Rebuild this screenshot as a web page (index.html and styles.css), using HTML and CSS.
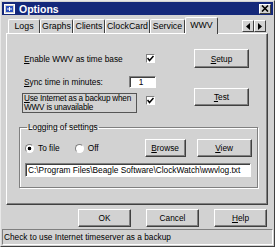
FILE: index.html
```html
<!DOCTYPE html>
<html lang="en">
<head>
  <meta charset="UTF-8">
  <title>Options</title>
  <link rel="stylesheet" href="styles.css">
</head>
<body>
  <div class="window">
    <div class="titlebar">
      <svg class="app-icon" width="11" height="10" viewBox="0 0 11 10">
        <rect x="0.5" y="0.5" width="10" height="9" fill="#d0d0d0" stroke="#fff"/>
        <rect x="2" y="2" width="7" height="6" fill="#2a50c0"/>
        <path d="M3 5 H8 M5.5 3 V7" stroke="#fff" stroke-width="1"/>
      </svg>
      <span class="title">Options</span>
      <span class="close">
        <svg width="8" height="7" viewBox="0 0 8 7"><path d="M1 0.5 L7 6.5 M7 0.5 L1 6.5" stroke="#000" stroke-width="1.6"/></svg>
      </span>
    </div>

    <div class="tabstrip">
      <div class="tab tab-logs">Logs</div>
      <div class="tab tab-graphs">Graphs</div>
      <div class="tab tab-clients">Clients</div>
      <div class="tab tab-clock">ClockCard</div>
      <div class="tab tab-service">Service</div>
      <div class="tab tab-wwv active">WWV</div>
      <div class="tab-scroll">
        <span class="arrow"><svg width="4" height="7" viewBox="0 0 4 7"><path d="M4 0 L0 3.5 L4 7Z" fill="#000"/></svg></span>
        <span class="arrow"><svg width="4" height="7" viewBox="0 0 4 7"><path d="M0 0 L4 3.5 L0 7Z" fill="#000"/></svg></span>
      </div>
    </div>

    <div class="panel">
      <div class="wwv-grid">
        <div class="lbl row1"><u>E</u>nable WWV as time base</div>
        <span class="check row1"><svg width="7" height="7" viewBox="0 0 7 7"><path d="M0.5 3 L2.5 5.5 L6.5 1" fill="none" stroke="#000" stroke-width="1.5"/></svg></span>
        <button class="btn btn-side row1"><u>S</u>etup</button>

        <div class="lbl row2"><u>S</u>ync time in minutes:</div>
        <input class="field minutes row2" type="text" value="1">

        <div class="lbl focus-box row3"><u>U</u>se Internet as a backup when<br>WWV is unavailable</div>
        <span class="check row3"><svg width="7" height="7" viewBox="0 0 7 7"><path d="M0.5 3 L2.5 5.5 L6.5 1" fill="none" stroke="#000" stroke-width="1.5"/></svg></span>
        <button class="btn btn-side btn-test row3"><u>T</u>est</button>
      </div>

      <fieldset class="logging">
        <legend>Logging of settings</legend>
        <div class="log-row">
          <span class="radio on"></span><span class="radio-lbl">To file</span>
          <span class="radio off"></span><span class="radio-lbl">Off</span>
          <button class="btn btn-browse"><u>B</u>rowse</button>
          <button class="btn btn-view"><u>V</u>iew</button>
        </div>
        <input class="field path" type="text" value="C:\Program Files\Beagle Software\ClockWatch\wwvlog.txt">
      </fieldset>
    </div>

    <div class="dialog-buttons">
      <button class="btn btn-dlg">OK</button>
      <button class="btn btn-dlg">Cancel</button>
      <button class="btn btn-dlg"><u>H</u>elp</button>
    </div>

    <div class="statusbar">Check to use Internet timeserver as a backup</div>
  </div>
</body>
</html>
```

FILE: styles.css
```css
body {
  margin: 0;
  font-family: "Liberation Sans", Arial, sans-serif;
  font-size: 8.3px;
  color: #000;
  background: #d2d2d2;
}
.window {
  width: 275px;
  height: 247px;
  box-sizing: border-box;
  border: 1px solid;
  border-color: #e8e8e8 #404040 #404040 #e8e8e8;
  padding: 1px;
  background: #d2d2d2;
  display: flex;
  flex-direction: column;
}
.titlebar {
  height: 13px;
  flex: none;
  background: #14287a;
  display: flex;
  align-items: center;
  padding: 0 2px 0 2px;
}
.app-icon {
  margin-right: 4px;
}
.title {
  color: #fff;
  font-weight: bold;
  font-size: 10.5px;
}
.close {
  margin-left: auto;
  width: 12px;
  height: 10px;
  box-sizing: border-box;
  background: #d2d2d2;
  border: 1px solid;
  border-color: #fff #404040 #404040 #fff;
  display: flex;
  align-items: center;
  justify-content: center;
}

/* tabs */
.tabstrip {
  height: 18px;
  flex: none;
  display: flex;
  align-items: flex-end;
  padding-left: 6px;
}
.tab {
  height: 14px;
  box-sizing: border-box;
  border: 1px solid;
  border-bottom: none;
  border-color: #fff #404040 #fff #fff;
  border-radius: 2px 2px 0 0;
  text-align: center;
  line-height: 12px;
  font-size: 8.8px;
}
.tab-logs { width: 32px; }
.tab-graphs { width: 33px; }
.tab-clients { width: 32px; }
.tab-clock { width: 45px; }
.tab-service { width: 35px; }
.tab-wwv { width: 33px; }
.tab.active {
  height: 17px;
  margin-bottom: -1px;
  background: #d2d2d2;
  position: relative;
  z-index: 1;
  line-height: 14px;
}
.tab-scroll {
  margin-left: auto;
  margin-right: 7px;
  margin-bottom: 1px;
  display: flex;
}
.arrow {
  width: 12px;
  height: 12px;
  box-sizing: border-box;
  border: 1px solid;
  border-color: #fff #404040 #404040 #fff;
  display: flex;
  align-items: center;
  justify-content: center;
}

/* panel */
.panel {
  height: 172px;
  flex: none;
  box-sizing: border-box;
  margin: 0 5px 0 4px;
  border: 1px solid;
  border-color: #fff #404040 #404040 #fff;
  box-shadow: inset -1px -1px #808080;
  padding: 15px 0 0 17px;
}
.wwv-grid {
  display: grid;
  grid-template-columns: 105px 27px 38px 55px;
  grid-template-rows: 19px 20px 25px;
}
.lbl {
  grid-column: 1;
  align-self: center;
}
.row1 { grid-row: 1; }
.row2 { grid-row: 2; }
.row3 { grid-row: 3; }
.lbl.row2 {
  align-self: end;
  line-height: 12px;
}
.check {
  grid-column: 2;
  justify-self: end;
  align-self: center;
  margin-right: 1px;
  width: 9px;
  height: 9px;
  box-sizing: border-box;
  background: #fff;
  border: 1px solid;
  border-color: #808080 #fff #fff #808080;
  display: flex;
  align-items: center;
  justify-content: center;
}
.field {
  font-family: inherit;
  font-size: inherit;
  background: #fff;
  box-sizing: border-box;
  border: 1px solid;
  border-color: #808080 #fff #fff #808080;
  box-shadow: inset 1px 1px #404040;
  outline: none;
  margin: 0;
}
.minutes {
  grid-column: 2;
  align-self: end;
  width: 27px;
  height: 12px;
  padding: 0 3px 0 0;
  text-align: center;
}
.focus-box {
  align-self: end;
  justify-self: start;
  margin-left: -2px;
  width: 115px;
  height: 20px;
  box-sizing: border-box;
  border: 1px solid #555;
  padding: 0 1px;
  line-height: 9px;
  white-space: nowrap;
  overflow: hidden;
  font-size: 8.2px;
  letter-spacing: -0.2px;
}
.btn {
  font-family: inherit;
  font-size: inherit;
  color: #000;
  background: #d2d2d2;
  box-sizing: border-box;
  border: 1px solid;
  border-color: #fff #404040 #404040 #fff;
  box-shadow: inset -1px -1px #808080;
  padding: 0;
  margin: 0;
}
.btn-side {
  grid-column: 4;
  width: 55px;
  height: 19px;
}
.btn-test {
  align-self: start;
  height: 18px;
}

/* logging group */
.logging {
  margin: 9px 9px 0 -5px;
  padding: 7px 5px 0 5px;
  border: 1px solid #808080;
  box-shadow: 1px 1px #fff, inset 1px 1px #fff;
  height: 66px;
  box-sizing: border-box;
}
.logging legend {
  padding: 0 1px;
  margin-left: 2px;
  line-height: 10px;
}
.log-row {
  display: flex;
  align-items: center;
  height: 18px;
}
.radio {
  width: 9px;
  height: 9px;
  box-sizing: border-box;
  border-radius: 50%;
  border: 1px solid;
  border-color: #808080 #fff #fff #808080;
  background: #fff;
  margin-right: 4px;
}
.radio.on {
  background: radial-gradient(circle, #000 0 1.6px, #fff 2.1px);
}
.radio.off {
  margin-left: 15px;
}
.btn-browse {
  width: 41px;
  height: 18px;
  margin-left: 46px;
}
.btn-view {
  width: 55px;
  height: 18px;
  margin-left: 11px;
}
.path {
  display: block;
  width: 226px;
  height: 14px;
  margin-top: 6px;
  padding: 0 2px;
}

/* bottom */
.dialog-buttons {
  flex: none;
  display: flex;
  justify-content: flex-end;
  gap: 15px;
  margin-top: 4px;
  padding-right: 6px;
}
.btn-dlg {
  width: 53px;
  height: 18px;
}
.statusbar {
  flex: none;
  height: 16px;
  margin-top: 2px;
  box-sizing: border-box;
  border: 1px solid;
  border-color: #808080 #fff #fff #808080;
  padding-left: 1px;
  line-height: 14px;
}
```
